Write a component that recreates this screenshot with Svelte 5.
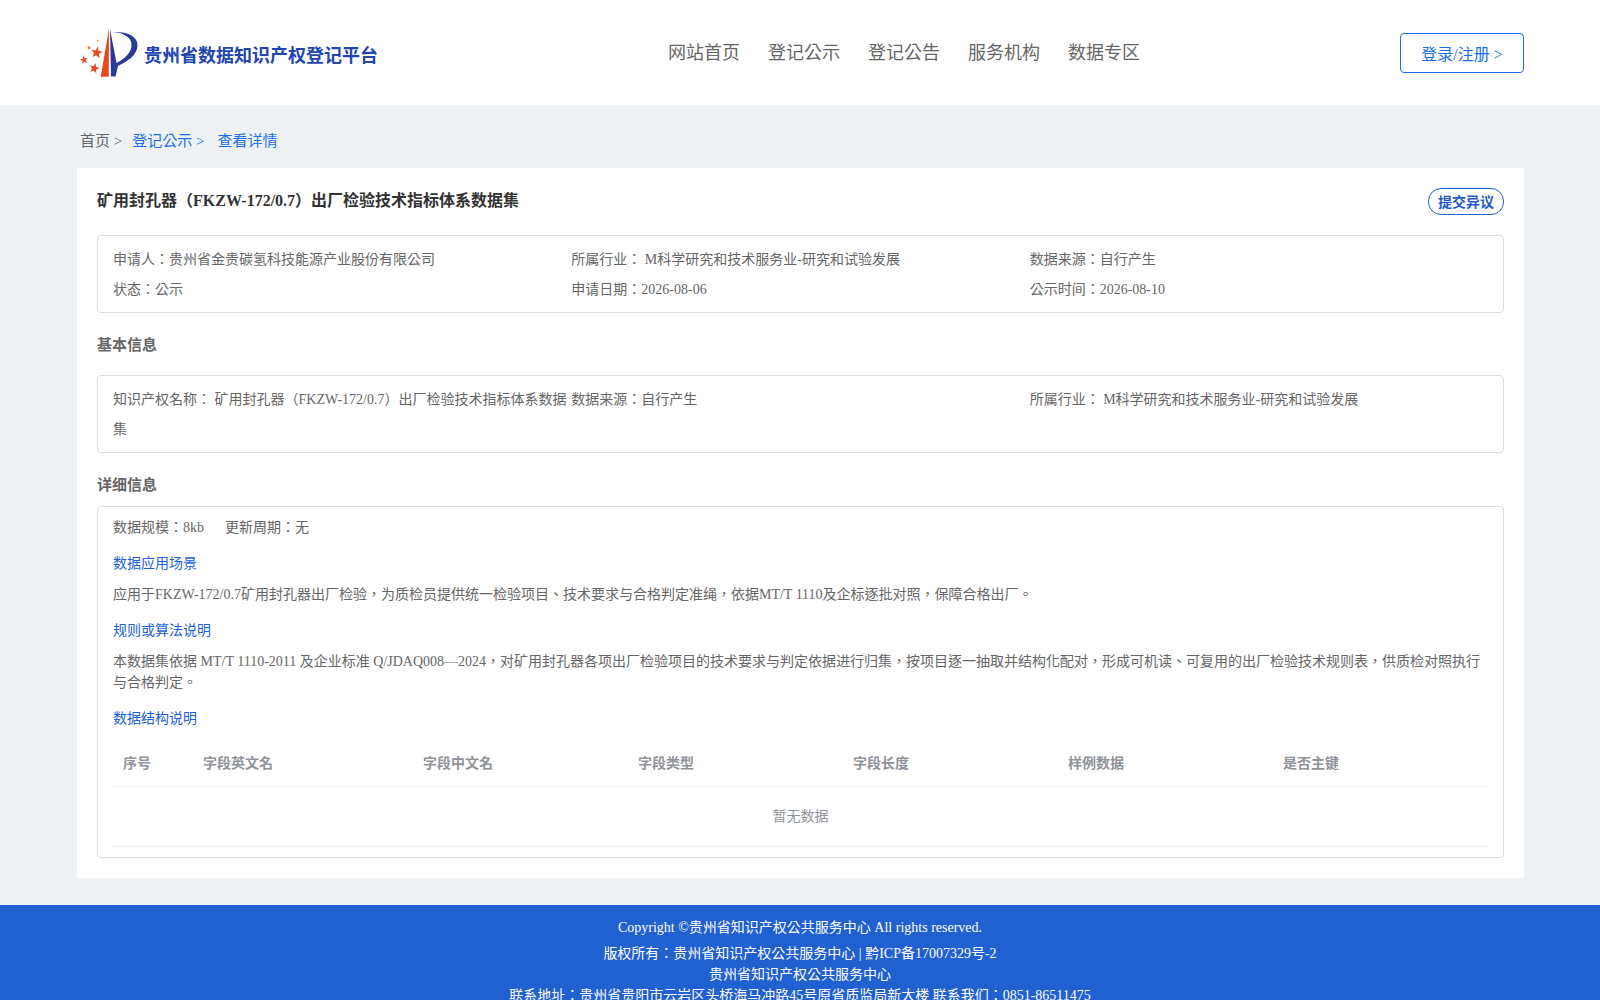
<script>
  const summary = [
    ['申请人：贵州省金贵碳氢科技能源产业股份有限公司', '所属行业： M科学研究和技术服务业-研究和试验发展', '数据来源：自行产生'],
    ['状态：公示', '申请日期：2026-08-06', '公示时间：2026-08-10']
  ];
  const columns = ['序号', '字段英文名', '字段中文名', '字段类型', '字段长度', '样例数据', '是否主键'];
  const stars = [
    [16.7, 24.7, 6.2, 10],
    [4, 32, 4.2, -10],
    [14.3, 40.3, 5.4, 15]
  ];

  function starPoints(cx, cy, r, rot) {
    let pts = [];
    for (let i = 0; i < 10; i++) {
      const rad = i % 2 ? r * 0.4 : r;
      const a = ((rot + i * 36 - 90) * Math.PI) / 180;
      pts.push((cx + rad * Math.cos(a)).toFixed(2) + ',' + (cy + rad * Math.sin(a)).toFixed(2));
    }
    return pts.join(' ');
  }
</script>

<header class="top">
  <div class="brand">
    <svg class="logo" viewBox="0 0 60 52" width="60" height="52">
      <path d="M29 1 L20.7 48.7 L28.7 48.7 Z" fill="#e8481c" />
      <path d="M30 1 L31 48.5 L35.5 48.5 L38 38 C48 33 57.5 27 57.5 17 C57.5 8 47 3.5 33 4 C44 5 51.5 9 51.5 17 C51.5 25 44 31 36.5 35 Z" fill="#2a3a96" />
      {#each stars as s}
        <polygon points={starPoints(s[0], s[1], s[2], s[3])} fill="#e8481c" />
      {/each}
      <circle cx="9" cy="19.7" r="1.5" fill="#ee7a50" />
      <circle cx="17.7" cy="12.7" r="1" fill="#ee9a78" />
    </svg>
    <span class="brand-name">贵州省数据知识产权登记平台</span>
  </div>
  <nav class="nav">
    <span>网站首页</span>
    <span>登记公示</span>
    <span>登记公告</span>
    <span>服务机构</span>
    <span>数据专区</span>
  </nav>
  <button class="login">登录/注册 &gt;</button>
</header>

<main class="page">
  <div class="crumbs">
    <span class="crumb-home">首页 &gt;</span>
    <span class="crumb-link">登记公示 &gt;</span>
    <span class="crumb-link">查看详情</span>
  </div>

  <section class="card">
    <div class="title-row">
      <h1>矿用封孔器（FKZW-172/0.7）出厂检验技术指标体系数据集</h1>
      <button class="objection">提交异议</button>
    </div>

    <div class="box grid-box">
      {#each summary as row}
        {#each row as cell}
          <div class="cell">{cell}</div>
        {/each}
      {/each}
    </div>

    <h2 class="section-basic">基本信息</h2>
    <div class="box grid-box">
      <div class="cell">知识产权名称： 矿用封孔器（FKZW-172/0.7）出厂检验技术指标体系数据集</div>
      <div class="cell">数据来源：自行产生</div>
      <div class="cell">所属行业： M科学研究和技术服务业-研究和试验发展</div>
    </div>

    <h2 class="section-detail">详细信息</h2>
    <div class="box detail">
      <div class="meta"><span>数据规模：8kb</span><span>更新周期：无</span></div>
      <div class="label">数据应用场景</div>
      <p>应用于FKZW-172/0.7矿用封孔器出厂检验，为质检员提供统一检验项目、技术要求与合格判定准绳，依据MT/T 1110及企标逐批对照，保障合格出厂。</p>
      <div class="label">规则或算法说明</div>
      <p>本数据集依据 MT/T 1110-2011 及企业标准 Q/JDAQ008—2024，对矿用封孔器各项出厂检验项目的技术要求与判定依据进行归集，按项目逐一抽取并结构化配对，形成可机读、可复用的出厂检验技术规则表，供质检对照执行与合格判定。</p>
      <div class="label">数据结构说明</div>
      <div class="table">
        <div class="thead">
          {#each columns as col}
            <div class="th">{col}</div>
          {/each}
        </div>
        <div class="empty">暂无数据</div>
      </div>
    </div>
  </section>
</main>

<footer class="foot">
  <div class="copy">Copyright ©贵州省知识产权公共服务中心 All rights reserved.</div>
  <div>版权所有：贵州省知识产权公共服务中心 | 黔ICP备17007329号-2</div>
  <div>贵州省知识产权公共服务中心</div>
  <div>联系地址：贵州省贵阳市云岩区头桥海马冲路45号原省质监局新大楼 联系我们：0851-86511475</div>
</footer>

<style>
  :global(body) {
    background: #eff2f5;
    font-family: "Liberation Serif", "Noto Sans CJK TC", serif;
    font-size: 14px;
    color: #666;
  }
  button {
    font-family: inherit;
    background: #fff;
    cursor: pointer;
  }
  .top {
    height: 105px;
    background: #fff;
    display: flex;
    align-items: center;
    padding: 0 76px 0 80px;
  }
  .brand {
    display: flex;
    align-items: center;
    width: 588px;
  }
  .logo {
    margin-top: 3px;
    margin-right: 4px;
  }
  .brand-name {
    font-size: 18px;
    font-weight: bold;
    color: #2345b0;
    margin-top: 3px;
  }
  .nav {
    display: flex;
    gap: 28px;
    font-size: 18px;
    margin-top: -3px;
    flex: 1;
  }
  .login {
    width: 124px;
    height: 40px;
    border: 1px solid #1a6fe8;
    border-radius: 4px;
    color: #1a6fe8;
    font-size: 16px;
    margin-top: 1px;
  }
  .page {
    padding: 0 76px 27px 77px;
  }
  .crumbs {
    height: 63px;
    display: flex;
    align-items: center;
    padding: 5px 0 0 3px;
    font-size: 15px;
    box-sizing: border-box;
  }
  .crumb-home {
    margin-right: 10px;
  }
  .crumb-link {
    color: #1a6fe8;
    margin-right: 13px;
  }
  .card {
    background: #fff;
    padding: 20px 20px 20px;
  }
  .title-row {
    display: flex;
    justify-content: space-between;
    align-items: flex-start;
    height: 47px;
  }
  h1 {
    margin: 0;
    padding-top: 1px;
    font-size: 16px;
    line-height: 24px;
    color: #333;
  }
  h2 {
    margin: 0;
    font-size: 15px;
    line-height: 22px;
    color: #666;
  }
  .section-basic {
    padding: 21px 0 19px;
  }
  .section-detail {
    padding: 21px 0 10px;
  }
  .objection {
    width: 76px;
    height: 27px;
    padding: 0 0 2px;
    border: 1px solid #2060d0;
    border-radius: 13px;
    color: #2158c8;
    font-size: 14px;
    font-weight: bold;
  }
  .box {
    border: 1px solid #ddd;
    border-radius: 4px;
    padding: 9px 15px 7px;
  }
  .grid-box {
    display: grid;
    grid-template-columns: repeat(3, 1fr);
    line-height: 30px;
  }
  .detail {
    padding: 10px 15px 10px;
    line-height: 21px;
  }
  .meta {
    display: flex;
    gap: 21px;
    margin-bottom: 15px;
  }
  .label {
    color: #1a62d6;
    margin-bottom: 10px;
  }
  p {
    margin: 0 0 15px;
  }
  .table {
    margin-top: 11px;
  }
  .thead {
    display: grid;
    grid-template-columns: 80px 220px repeat(5, 215px);
    height: 46px;
    align-items: center;
    border-bottom: 1px solid #ebeef5;
  }
  .th {
    padding-left: 10px;
    font-weight: bold;
    color: #909399;
  }
  .empty {
    height: 59px;
    line-height: 59px;
    text-align: center;
    color: #909399;
    border-bottom: 1px solid #ebeef5;
  }
  .foot {
    background: #2060d0;
    color: #fff;
    text-align: center;
    line-height: 21px;
    padding: 12px 0 14px;
  }
  .copy {
    margin-bottom: 5px;
  }
</style>
